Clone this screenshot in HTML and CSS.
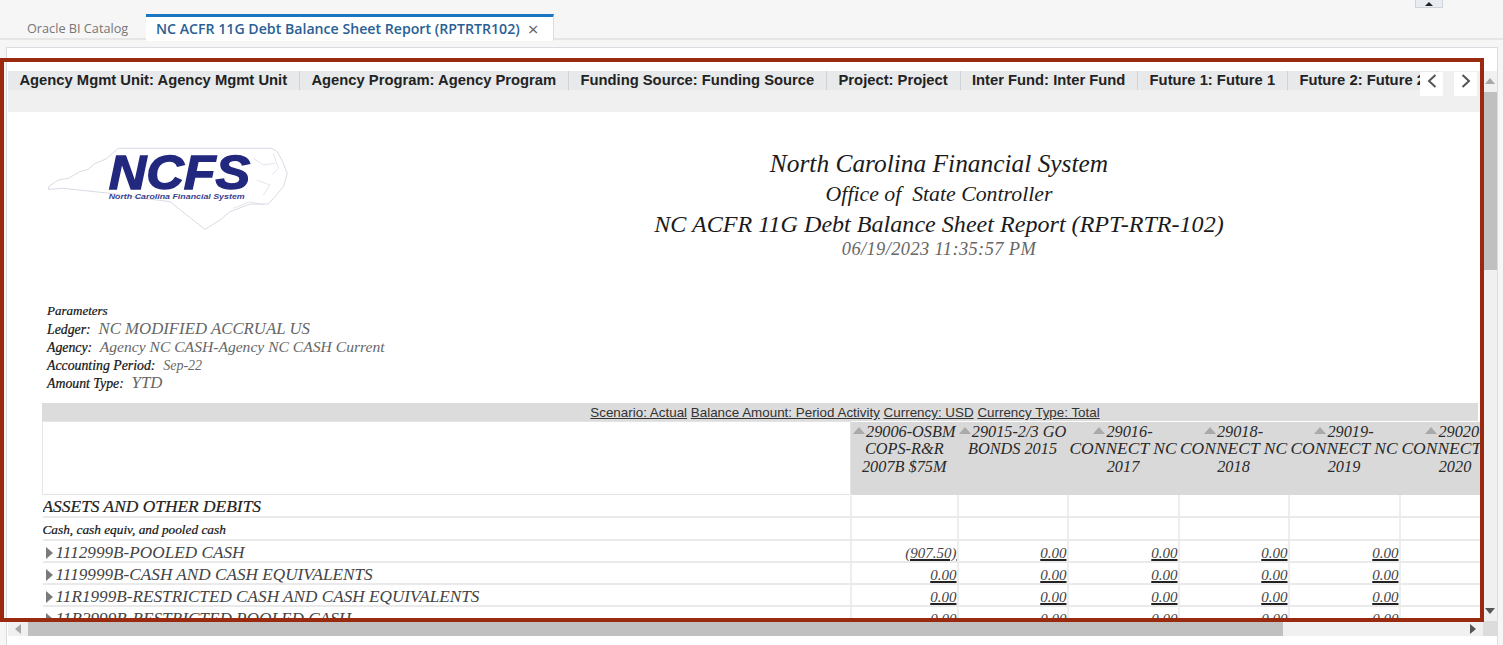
FILE: index.html
```html
<!DOCTYPE html>
<html lang="en">
<head>
<meta charset="utf-8">
<title>NC ACFR 11G Debt Balance Sheet Report</title>
<link rel="stylesheet" href="styles.css">
</head>
<body>
<div class="app">
  <div class="topbar">
    <div class="collapse"><svg width="10" height="5" viewBox="0 0 10 5"><path d="M1 5 5 1 9 5z" fill="#222"/></svg></div>
    <div class="tabs">
      <div class="tab">Oracle BI Catalog</div>
      <div class="tab tab-active">NC ACFR 11G Debt Balance Sheet Report (RPTRTR102)<span class="close">×</span></div>
    </div>
  </div>
  <div class="panel">
    <div class="scroller">
      <div class="viewport">
        <div class="filterbar">
          <div class="filter">Agency Mgmt Unit: Agency Mgmt Unit</div>
          <div class="filter">Agency Program: Agency Program</div>
          <div class="filter">Funding Source: Funding Source</div>
          <div class="filter">Project: Project</div>
          <div class="filter">Inter Fund: Inter Fund</div>
          <div class="filter">Future 1: Future 1</div>
          <div class="filter">Future 2: Future 2</div>
        </div>
        <div class="nav nav-prev"><svg width="12" height="16" viewBox="0 0 12 16"><path d="M9.5 2 3 8l6.5 6" fill="none" stroke="#555" stroke-width="2"/></svg></div>
        <div class="nav nav-next"><svg width="12" height="16" viewBox="0 0 12 16"><path d="M2.5 2 9 8l-6.5 6" fill="none" stroke="#555" stroke-width="2"/></svg></div>
        <div class="report">
          <div class="report-head">
            <svg class="logo" width="280" height="120" viewBox="0 0 840 360">
              <path class="state" d="M55 178 58 168 85 150 115 145 150 125 175 118 195 100 228 87 265 55 725 55 742 65 758 95 772 130 760 170 735 200 715 222 660 222 600 245 570 270 525 298 470 255 420 215 340 205 240 190 100 175z"/>
              <path class="coast" d="M670 85 700 105 735 100M680 150 720 165 700 195M610 235 660 215 700 225M730 70 745 115 725 135"/>
              <text class="logo-mark" x="236" y="178" textLength="425" lengthAdjust="spacingAndGlyphs">NCFS</text>
              <text class="logo-sub" x="236" y="208" textLength="408" lengthAdjust="spacingAndGlyphs">North Carolina Financial System</text>
            </svg>
            <div class="titles">
              <div class="t1">North Carolina Financial System</div>
              <div class="t2">Office of&nbsp; State Controller</div>
              <div class="t3">NC ACFR 11G Debt Balance Sheet Report (RPT-RTR-102)</div>
              <div class="t4">06/19/2023 11:35:57 PM</div>
            </div>
          </div>
          <div class="params">
            <div class="param-row param-title">Parameters</div>
            <div class="param-row"><b>Ledger:</b>&nbsp; <span class="v-caps">NC MODIFIED ACCRUAL US</span></div>
            <div class="param-row"><b>Agency:</b>&nbsp; <span>Agency NC CASH-Agency NC CASH Current</span></div>
            <div class="param-row"><b>Accounting Period:</b>&nbsp; <span class="v-small">Sep-22</span></div>
            <div class="param-row"><b>Amount Type:</b>&nbsp; <span class="v-caps">YTD</span></div>
          </div>
          <div class="scenario"><u>Scenario: Actual</u> <u>Balance Amount: Period Activity</u> <u>Currency: USD</u> <u>Currency Type: Total</u></div>
          <table class="grid">
            <colgroup><col class="c-label"><col class="c-a"><col class="c-b"><col class="c-c"><col class="c-b"><col class="c-c"><col class="c-c"></colgroup>
            <thead>
              <tr>
                <th class="blank"></th>
                <th><i class="sort"></i>29006-OSBM<br>COPS-R&amp;R<br>2007B $75M</th>
                <th><i class="sort"></i>29015-2/3 GO<br>BONDS 2015</th>
                <th><i class="sort"></i>29016-<br><span class="wide">CONNECT NC</span><br>2017</th>
                <th><i class="sort"></i>29018-<br><span class="wide">CONNECT NC</span><br>2018</th>
                <th><i class="sort"></i>29019-<br><span class="wide">CONNECT NC</span><br>2019</th>
                <th><i class="sort"></i>29020-<br><span class="wide">CONNECT NC</span><br>2020</th>
              </tr>
            </thead>
            <tbody>
              <tr class="sec"><td class="h1">ASSETS AND OTHER DEBITS</td><td></td><td></td><td></td><td></td><td></td><td></td></tr>
              <tr class="sec2"><td class="h2">Cash, cash equiv, and pooled cash</td><td></td><td></td><td></td><td></td><td></td><td></td></tr>
              <tr><td class="acct"><i class="expand"></i>1112999B-POOLED CASH</td><td class="num"><u>(907.50)</u></td><td class="num"><u>0.00</u></td><td class="num"><u>0.00</u></td><td class="num"><u>0.00</u></td><td class="num"><u>0.00</u></td><td class="num"><u>0.00</u></td></tr>
              <tr><td class="acct"><i class="expand"></i>1119999B-CASH AND CASH EQUIVALENTS</td><td class="num"><u>0.00</u></td><td class="num"><u>0.00</u></td><td class="num"><u>0.00</u></td><td class="num"><u>0.00</u></td><td class="num"><u>0.00</u></td><td class="num"><u>0.00</u></td></tr>
              <tr><td class="acct"><i class="expand"></i>11R1999B-RESTRICTED CASH AND CASH EQUIVALENTS</td><td class="num"><u>0.00</u></td><td class="num"><u>0.00</u></td><td class="num"><u>0.00</u></td><td class="num"><u>0.00</u></td><td class="num"><u>0.00</u></td><td class="num"><u>0.00</u></td></tr>
              <tr><td class="acct"><i class="expand"></i>11R2999B-RESTRICTED POOLED CASH</td><td class="num"><u>0.00</u></td><td class="num"><u>0.00</u></td><td class="num"><u>0.00</u></td><td class="num"><u>0.00</u></td><td class="num"><u>0.00</u></td><td class="num"><u>0.00</u></td></tr>
            </tbody>
          </table>
        </div>
      </div>
      <div class="vscroll">
        <svg class="arrow" width="10" height="6" viewBox="0 0 10 6"><path d="M0 6 5 0 10 6z" fill="#a8a8a8"/></svg>
        <div class="vthumb"></div>
        <div class="vtrack"></div>
        <svg class="arrow" width="10" height="6" viewBox="0 0 10 6"><path d="M0 0H10L5 6z" fill="#555"/></svg>
      </div>
      <div class="hscroll">
        <svg class="arrow" width="6" height="10" viewBox="0 0 6 10"><path d="M6 0V10L0 5z" fill="#a8a8a8"/></svg>
        <div class="hthumb"></div>
        <div class="htrack"></div>
        <svg class="arrow" width="6" height="10" viewBox="0 0 6 10"><path d="M0 0V10L6 5z" fill="#555"/></svg>
      </div>
      <div class="corner"></div>
    </div>
  </div>
</div>
<div class="callout"></div>
</body>
</html>
```

FILE: styles.css
```css
* { box-sizing: border-box; }
html, body { margin: 0; height: 645px; overflow: hidden; }
body { background: #f6f6f6; font-family: "Liberation Sans", Arial, sans-serif; position: relative; }

.app { display: flex; flex-direction: column; width: 1503px; height: 645px; }
.topbar { height: 40px; position: relative; border-bottom: 2px solid #e6e6e6; padding: 14px 0 0 2px; flex: none; }
.collapse { position: absolute; left: 1415px; top: 0; width: 28px; height: 8px; background: #e9edf2; border: 1px solid #d0d4da; border-top: 0; display: flex; align-items: center; justify-content: center; }
.tabs { display: flex; height: 26px; }
.tab { padding: 0 0 0 25px; line-height: 28px; color: #777; width: 144px; white-space: nowrap; font-family: "Open Sans", "Liberation Sans", sans-serif; font-size: 12.7px; }
.tab-active { width: 408px; padding: 0 0 0 10px; height: 27px; background: #fff; border-top: 3px solid #1a76c0; border-right: 1px solid #ddd; color: #2a5f94; font-weight: 600; font-size: 14.15px; line-height: 23px; }
.close { color: #666; font-size: 19px; font-weight: 400; margin-left: 8px; vertical-align: -2px; line-height: 10px; }

.panel { margin: 7px 5px 0 6px; flex: 1; background: #fff; border: 1px solid #d9dde2; border-bottom: 0; padding: 23px 0 0 1px; min-height: 0; }
.scroller { display: grid; grid-template-columns: 1475px 14px; grid-template-rows: 550px 15px; width: 1489px; }

.viewport { position: relative; overflow: hidden; background: #fff; }
.filterbar { height: 41px; background: #f0f0f0; display: flex; align-items: flex-start; overflow: hidden; white-space: nowrap; }
.filter { flex: none; height: 19px; padding: 0 11.9px 0 11.4px; background: #e7e9eb; border-right: 1px solid #cfd3d7; font-size: 14.77px; font-weight: 700; line-height: 19px; color: #222; }
.nav { position: absolute; top: 1px; width: 23px; height: 24px; background: #fff; display: flex; align-items: flex-start; justify-content: center; padding-top: 1px; }
.nav-prev { left: 1412px; }
.nav-next { left: 1446px; }

.report { font-family: "Liberation Serif", "Times New Roman", serif; font-style: italic; padding-left: 34px; color: #222; }
.report-head { display: flex; height: 159px; }
.logo { flex: none; margin: 18px 0 0 -12px; display: block; }
.state { fill: #fff; stroke: #c6c8d8; stroke-width: 2; }
.coast { fill: none; stroke: #c6c8d8; stroke-width: 1.5; }
.logo-mark { font-family: "Liberation Sans", sans-serif; font-style: italic; font-weight: 700; font-size: 146px; fill: #23287f; stroke: #23287f; stroke-width: 4px; }
.logo-sub { font-family: "Liberation Sans", sans-serif; font-style: italic; font-weight: 700; font-size: 21px; fill: #3b3f8e; }
.titles { width: 1080px; margin-left: 89px; text-align: center; color: #1b1b1b; padding-top: 36px; white-space: nowrap; }
.t1 { font-size: 25.4px; line-height: 31px; }
.t2 { font-size: 21.8px; line-height: 31px; }
.t3 { font-size: 24.1px; line-height: 28px; }
.t4 { font-size: 18.4px; line-height: 23px; color: #666; letter-spacing: .4px; }

.params { font-size: 15.6px; height: 132px; padding: 31px 0 0 5px; color: #666; }
.param-row { height: 18px; line-height: 18px; white-space: nowrap; }
.params b { font-weight: 400; font-size: 13.8px; color: #111; -webkit-text-stroke: .2px #111; }
.v-caps { font-size: 16.8px; }
.v-small { font-size: 14px; }
.param-title { color: #111; font-size: 13px; -webkit-text-stroke: .2px #111; }
.scenario { height: 18px; width: 1436px; padding-left: 170px; background: #dcdcdc; text-align: center; font-family: "Liberation Sans", sans-serif; font-style: normal; font-size: 13.4px; line-height: 20px; color: #333; white-space: nowrap; }

.grid { border-collapse: collapse; table-layout: fixed; width: 1468px; }
.c-label { width: 808px; } .c-a { width: 107px; } .c-b { width: 110px; } .c-c { width: 111px; }
.grid th { height: 73px; background: #d9d9d9; font-weight: 400; font-size: 16.3px; line-height: 17.5px; vertical-align: top; text-align: center; padding: 1px 0 0; white-space: nowrap; color: #2a2a2a; }
.grid th.blank { background: #fff; border: 1px solid #e4e4e4; }
.wide { font-size: 17.5px; }
.grid td { padding: 3px 0 0; border-bottom: 2px solid #eaeaea; white-space: nowrap; height: 22px; line-height: 17px; overflow: hidden; vertical-align: top; }
.grid td + td { border-left: 2px solid #eee; }
.sec2 td { height: 23px; }
.sort { display: inline-block; width: 0; height: 0; border: 6px solid transparent; border-top: 0; border-bottom: 7px solid #a9a9a9; margin-right: 1px; vertical-align: 3px; }
.expand { display: inline-block; width: 0; height: 0; border: 6px solid transparent; border-right: 0; border-left: 7px solid #7a7a7a; margin: 0 3px 0 3px; vertical-align: -1px; }
.h1 { font-size: 17.4px; color: #222; -webkit-text-stroke: .2px #222; }
.h2 { font-size: 13.3px; color: #111; -webkit-text-stroke: .2px #111; }
.acct { font-size: 17.2px; color: #444; }
.grid .num { font-size: 15px; text-align: right; color: #444; padding-top: 5px; line-height: 15px; }
.num u { text-decoration-thickness: 1.5px; text-decoration-color: #222; }

.vscroll { background: #f0f0f0; display: flex; flex-direction: column; align-items: center; justify-content: space-between; }
.vscroll .arrow { margin: 7px 0; flex: none; }
.vthumb { width: 100%; height: 178px; background: #c0c0c0; flex: none; margin-top: 1px; }
.vtrack { flex: 1; }
.hscroll { background: #f0f0f0; display: flex; align-items: center; padding-left: 7px; }
.hscroll .arrow { flex: none; }
.hthumb { width: 1255px; height: 15px; background: #c0c0c0; margin-left: 7px; flex: none; }
.htrack { flex: 1; }
.hscroll .arrow:last-child { margin-right: 7px; }
.corner { background: #dcdcdc; }

.callout { position: absolute; left: 0; top: 58px; width: 1484px; height: 564px; border: 4px solid #9a2a0f; pointer-events: none; }
```
